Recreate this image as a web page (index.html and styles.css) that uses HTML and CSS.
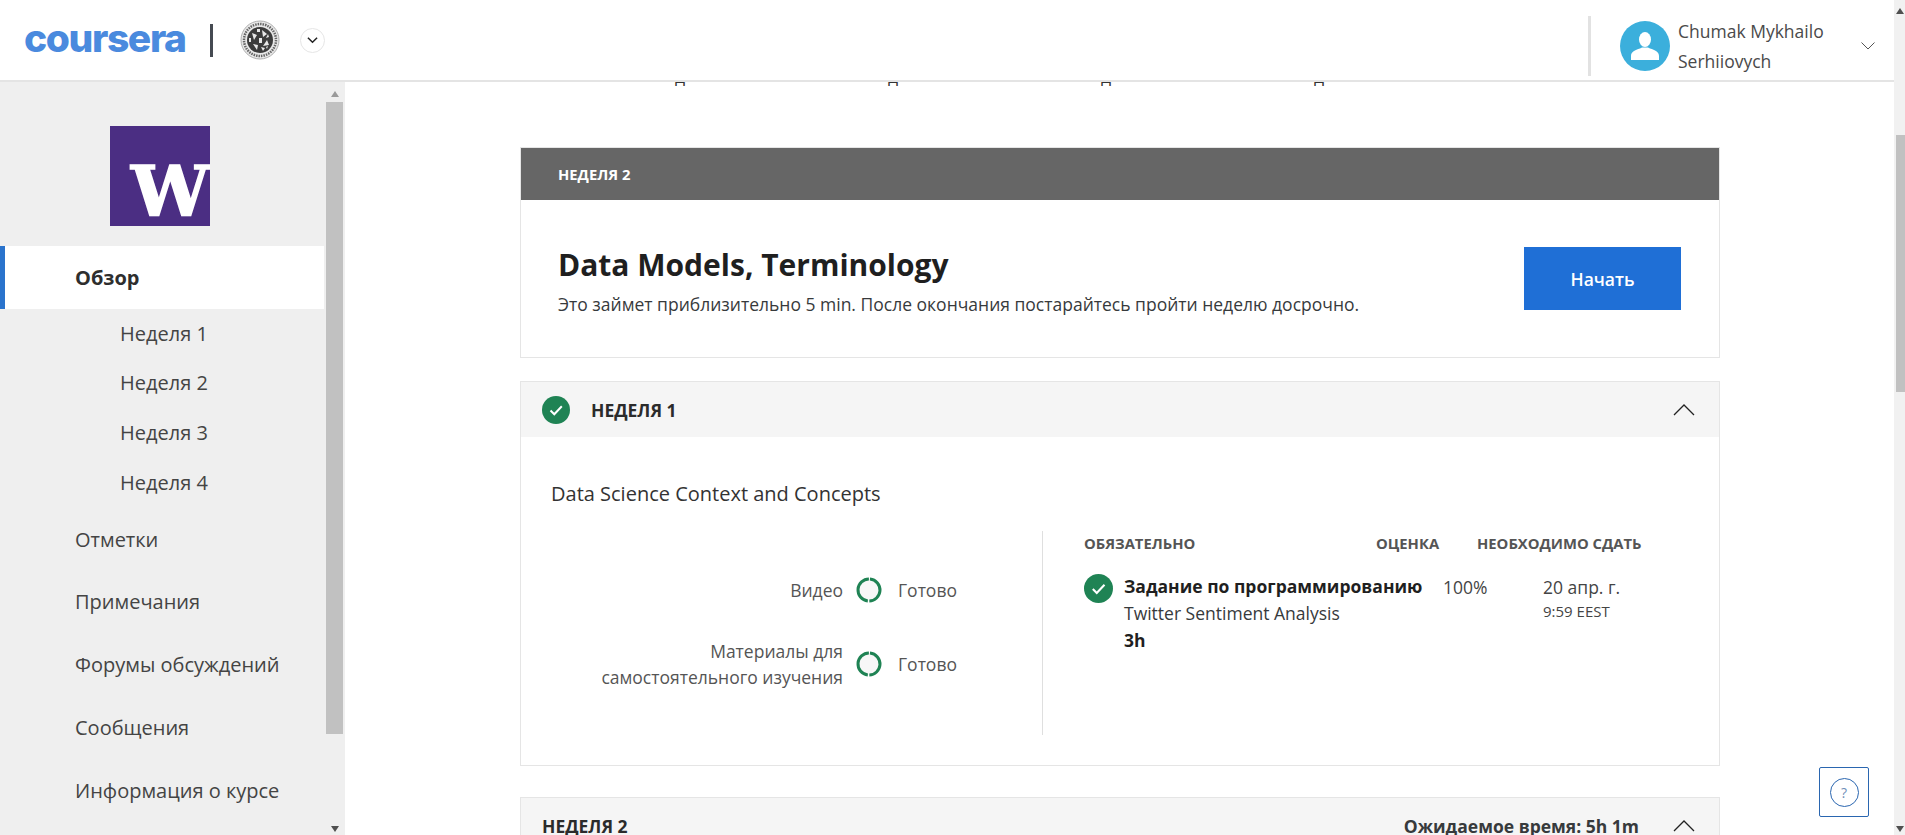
FILE: index.html
```html
<!DOCTYPE html>
<html lang="ru">
<head>
<meta charset="utf-8">
<title>Coursera</title>
<link rel="stylesheet" href="styles.css">
</head>
<body>
<div class="page">
  <div class="app">
    <header class="topbar">
      <div class="brand">
        <span class="wordmark">coursera</span>
        <span class="brand-sep"></span>
        <svg class="seal" viewBox="0 0 40 40" aria-hidden="true">
          <circle cx="20" cy="20" r="19" fill="#e8e8e8" stroke="#b0b0b0" stroke-width="1"/>
          <circle cx="20" cy="20" r="16" fill="none" stroke="#666" stroke-width="2.500" stroke-dasharray="1.500 1"/>
          <circle cx="20" cy="20" r="13" fill="#3c3c3c"/>
          <path d="M12 13l5 2-3 5zM22 10l5 4-4 3zM27 20l2 5-6 1zM13 24l5 1-1 5zM19 18h3v5h-3zM21 27l4 1-2 3zM17 9h3v3h-3zM9 18h2v4H9zM28 14l1 3-3 1zM26 27l2-1-1 3z" fill="#e8e8e8"/>
        </svg>
        <span class="switcher">
          <svg viewBox="0 0 12 8" aria-hidden="true"><path d="M1 1.5l5 5 5-5" fill="none" stroke="#222" stroke-width="1.6"/></svg>
        </span>
      </div>
      <div class="account">
        <span class="avatar">
          <svg viewBox="0 0 50 50" aria-hidden="true"><ellipse cx="25" cy="18.5" rx="6" ry="7.5" fill="#fff"/><path d="M11 39v-4c0-4 4-6 9-7.500l2-1h6l2 1c5 1.500 9 3.500 9 7.500v4z" fill="#fff"/></svg>
        </span>
        <span class="account-name">Chumak Mykhailo<br>Serhiiovych</span>
        <svg class="account-caret" viewBox="0 0 14 8" aria-hidden="true"><path d="M.5.500L7 7 13.500.500" fill="none" stroke="#555" stroke-width="1"/></svg>
      </div>
    </header>
    <div class="workspace">
      <aside class="sidebar">
        <div class="side-scroll">
          <div class="side-logo"><div class="uw"><span>W</span></div></div>
          <nav class="nav">
            <a class="nav-item active">Обзор</a>
            <div class="subnav">
              <a>Неделя 1</a>
              <a>Неделя 2</a>
              <a>Неделя 3</a>
              <a>Неделя 4</a>
            </div>
            <a class="nav-item">Отметки</a>
            <a class="nav-item">Примечания</a>
            <a class="nav-item">Форумы обсуждений</a>
            <a class="nav-item">Сообщения</a>
            <a class="nav-item">Информация о курсе</a>
          </nav>
        </div>
        <div class="scrollbar side-bar">
          <span class="arrow up"></span>
          <span class="thumb"></span>
          <span class="arrow down"></span>
        </div>
      </aside>
      <main class="main">
        <div class="clipped"><span>д</span><span>д</span><span>д</span><span>д</span></div>

        <section class="card next">
          <div class="next-head">НЕДЕЛЯ 2</div>
          <div class="next-body">
            <div>
              <h1>Data Models, Terminology</h1>
              <p>Это займет приблизительно 5 min. После окончания постарайтесь пройти неделю досрочно.</p>
            </div>
            <button class="start">Начать</button>
          </div>
        </section>

        <section class="card week">
          <div class="week-head">
            <svg class="check" viewBox="0 0 28 28" aria-hidden="true"><circle cx="14" cy="14" r="14" fill="#1f8354"/><path d="M8.500 14.500l3.800 3.800 7.500-8" fill="none" stroke="#fff" stroke-width="2"/></svg>
            <span class="week-title">НЕДЕЛЯ 1</span>
            <svg class="collapse" viewBox="0 0 22 12" aria-hidden="true"><path d="M1 11L11 1l10 10" fill="none" stroke="#222" stroke-width="1.300"/></svg>
          </div>
          <div class="week-body">
            <h2>Data Science Context and Concepts</h2>
            <div class="week-grid">
              <div class="progress">
                <div class="progress-row">
                  <span class="progress-label">Видео</span>
                  <svg class="ring" viewBox="0 0 26 26" aria-hidden="true"><circle cx="13" cy="13" r="11" transform="rotate(-85 13 13)" fill="#f7f7f7" stroke="#1f8354" stroke-width="3" stroke-dasharray="33 1.560"/></svg>
                  <span>Готово</span>
                </div>
                <div class="progress-row">
                  <span class="progress-label">Материалы для самостоятельного изучения</span>
                  <svg class="ring" viewBox="0 0 26 26" aria-hidden="true"><circle cx="13" cy="13" r="11" transform="rotate(-85 13 13)" fill="#f7f7f7" stroke="#1f8354" stroke-width="3" stroke-dasharray="33 1.560"/></svg>
                  <span>Готово</span>
                </div>
              </div>
              <div class="assign">
                <div class="assign-head">
                  <span class="col-a">Обязательно</span>
                  <span class="col-b">Оценка</span>
                  <span>Необходимо сдать</span>
                </div>
                <div class="assign-row">
                  <svg class="check big" viewBox="0 0 28 28" aria-hidden="true"><circle cx="14" cy="14" r="14" fill="#1f8354"/><path d="M8.500 14.500l3.800 3.800 7.500-8" fill="none" stroke="#fff" stroke-width="2"/></svg>
                  <div class="assign-info">
                    <strong>Задание по программированию</strong>
                    <span>Twitter Sentiment Analysis</span>
                    <strong>3h</strong>
                  </div>
                  <div class="assign-grade">100%</div>
                  <div class="assign-due">20 апр. г.<small>9:59 EEST</small></div>
                </div>
              </div>
            </div>
          </div>
        </section>

        <section class="card week tail">
          <div class="week-head">
            <span class="week-title">НЕДЕЛЯ 2</span>
            <span class="estimate">Ожидаемое время: 5h 1m</span>
            <svg class="collapse" viewBox="0 0 22 12" aria-hidden="true"><path d="M1 11L11 1l10 10" fill="none" stroke="#222" stroke-width="1.300"/></svg>
          </div>
        </section>
      </main>
    </div>
    <button class="help" aria-label="Помощь"><span>?</span></button>
  </div>
  <div class="scrollbar page-bar">
    <span class="arrow up"></span>
    <span class="thumb"></span>
    <span class="arrow down"></span>
  </div>
</div>
</body>
</html>
```
FILE: styles.css
```css
* { box-sizing: border-box; }
html, body { margin: 0; height: 100%; overflow: hidden; }
body { font-family: "Open Sans", "Noto Sans", sans-serif; font-size: 17.500px; color: #373a3c; background: #fff; }
.page { display: flex; height: 835px; width: 1905px; }
.app { position: relative; flex: 1; min-width: 0; display: flex; flex-direction: column; }

.topbar { height: 82px; flex: none; display: flex; justify-content: space-between; background: #fff; border-bottom: 2px solid #e4e4e4; position: relative; z-index: 2; }
.brand { display: flex; align-items: center; padding-left: 24px; }
.wordmark { font-family: Inter, sans-serif; font-weight: 800; font-size: 39px; letter-spacing: -1.400px; line-height: 40px; color: #4a8ade; width: 186px; margin-top: -4px; }
.brand-sep { width: 3px; height: 33px; background: #454a52; }
.seal { width: 40px; height: 40px; margin-left: 27px; }
.switcher { width: 25px; height: 25px; margin-left: 20px; border: 1px solid #e6e6e6; border-radius: 50%; display: flex; align-items: center; justify-content: center; }
.switcher svg { width: 11px; height: 8px; }
.account { display: flex; align-items: center; height: 60px; margin-top: 16px; width: 306px; border-left: 3px solid #e2e2e2; padding-left: 29px; }
.avatar { width: 50px; height: 50px; border-radius: 50%; background: #3bafdc; flex: none; }
.avatar svg { width: 50px; height: 50px; display: block; }
.account-name { margin-left: 8px; font-size: 17.500px; line-height: 30px; color: #4a4a4a; width: 183px; white-space: nowrap; }
.account-caret { width: 14px; height: 8px; }

.workspace { flex: 1; display: flex; min-height: 0; }
.sidebar { width: 345px; flex: none; display: flex; background: #efefef; overflow: hidden; }
.side-scroll { width: 324px; flex: none; }
.side-logo { height: 164px; padding: 44px 0 0 110px; }
.uw { width: 100px; height: 100px; background: #4b2e83; overflow: hidden; position: relative; }
.uw span { position: absolute; left: 21px; top: 22px; font-family: "DejaVu Serif", "Liberation Serif", serif; font-weight: 700; font-size: 70px; line-height: 86px; color: #fff; -webkit-text-stroke: 1.500px #fff; }
.nav { display: flex; flex-direction: column; }
.nav-item, .subnav a { display: block; color: #444; font-size: 20px; }
.nav-item { padding-left: 75px; height: 62.800px; line-height: 63.500px; }
.nav-item.active { background: #fff; border-left: 5px solid #2a73cc; padding-left: 70px; font-weight: 700; color: #2e2e2e; height: 62.500px; line-height: 64px; }
.subnav a { padding-left: 120px; height: 49.800px; line-height: 50.500px; }

.scrollbar { display: flex; flex-direction: column; align-items: center; flex: none; background: #f1f1f1; }
.scrollbar .thumb { display: block; background: #c1c1c1; }
.arrow { display: block; width: 0; height: 0; border-left: 4.500px solid transparent; border-right: 4.500px solid transparent; flex: none; }
.arrow.up { border-bottom: 6px solid #9a9a9a; }
.arrow.down { border-top: 6px solid #505050; }
.side-bar { width: 21px; padding: 0 1px 0 1px; background: #efefef; }
.side-bar .arrow.up { margin: 9px 0 5px; }
.side-bar .thumb { width: 17px; height: 632px; }
.side-bar .arrow.down { margin-top: 92px; }
.page-bar { width: 11px; }
.page-bar .arrow.up { margin: 8px 0 0; border-bottom-color: #505050; }
.page-bar .thumb { width: 9px; height: 257px; margin: 121px 0 0 2px; }
.page-bar .arrow.down { margin-top: auto; margin-bottom: 3px; }

.main { flex: 1; min-width: 0; padding: 0 0 0 175px; overflow: hidden; }
.clipped { display: flex; height: 4px; overflow: hidden; align-items: flex-start; width: 1200px; padding-left: 155px; gap: 203px; font-size: 17.500px; color: #333; }
.clipped span { display: block; width: 10px; height: 12px; line-height: 0; margin-top: -6.500px; }
.card { width: 1200px; border: 1px solid #e5e5e5; background: #fff; }
.next { margin-top: 61px; }
.next-head { height: 52px; background: #666; color: #fff; font-weight: 700; font-size: 14.800px; line-height: 52px; padding-left: 37px; }
.next-body { height: 157px; display: flex; align-items: center; justify-content: space-between; padding: 3px 38px 0 37px; }
h1 { margin: 0; font-size: 30px; line-height: 40px; font-weight: 700; color: #1f1f1f; }
.next-body p { margin: 7px 0 0; font-size: 17.500px; line-height: 24px; color: #373a3c; }
.start { width: 157px; height: 63px; background: #1f6fd6; color: #fff; border: 0; font: 600 17.500px "Open Sans", sans-serif; margin-top: -3px; }

.week { margin-top: 23px; }
.week-head { height: 55px; background: #f5f5f5; display: flex; align-items: center; padding: 0 24px 0 21px; }
.check { width: 28px; height: 28px; flex: none; }
.week-title { margin-left: 21px; font-weight: 700; font-size: 17.500px; color: #2b2b2b; }
.tail { margin-top: 31px; }
.tail .week-title { margin-left: 0; }
.collapse { width: 22px; height: 12px; margin-left: auto; }
.estimate { margin-left: auto; font-weight: 700; font-size: 17.500px; color: #373a3c; }
.estimate + .collapse { margin-left: 34px; }
.week-body { height: 328px; padding: 42px 0 0 30px; }
h2 { margin: 0; font-size: 20px; line-height: 30px; font-weight: 400; color: #333; }
.week-grid { display: flex; margin-top: 22px; height: 204px; }
.progress { width: 492px; border-right: 1px solid #dfdfdf; padding-top: 46px; }
.progress-row { display: flex; align-items: center; gap: 13px; height: 26px; margin-bottom: 48px; }
.progress-label { width: 292px; padding-left: 30px; text-align: right; line-height: 26px; flex: none; color: #555; }
.progress-row > span:last-child { margin-left: 3px; color: #555; }
.ring { width: 26px; height: 26px; flex: none; }
.assign { padding-left: 41px; flex: 1; }
.assign-head { display: flex; font-weight: 700; font-size: 14.800px; line-height: 24px; text-transform: uppercase; color: #555; }
.col-a { width: 292px; }
.col-b { width: 101px; }
.assign-row { display: flex; margin-top: 19px; }
.check.big { width: 29px; height: 29px; }
.assign-info { width: 320px; margin-left: 11px; display: flex; flex-direction: column; line-height: 26.800px; color: #373a3c; white-space: nowrap; margin-top: -1px; }
.assign-info strong { color: #1f1f1f; }
.assign-grade { width: 100px; line-height: 26px; color: #444; margin-left: -1px; }
.assign-due { line-height: 26px; color: #444; }
.assign-due small { display: block; font-size: 15px; line-height: 22px; }

.help { position: absolute; left: 1819px; top: 767px; width: 50px; height: 50px; background: #fff; border: 1px solid #2a66b0; border-radius: 2px; padding: 0; display: flex; align-items: center; justify-content: center; z-index: 3; }
.help span { width: 29px; height: 29px; border: 1px solid #2a66b0; border-radius: 50%; color: #6f8fb8; font: 14px/27px "Open Sans", sans-serif; text-align: center; }
```
